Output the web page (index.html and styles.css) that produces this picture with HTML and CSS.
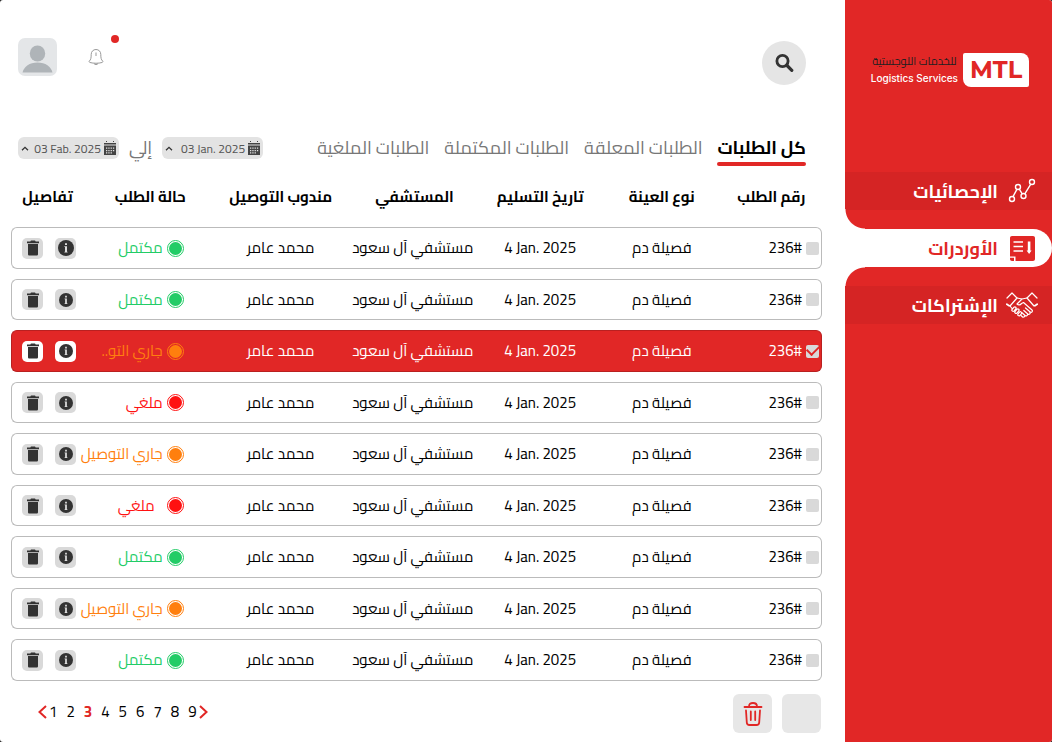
FILE: index.html
```html
<!DOCTYPE html>
<html lang="ar" dir="rtl">
<head>
  <meta charset="UTF-8" />
  <meta name="viewport" content="width=device-width, initial-scale=1.0"/>
  <title>MTL - الأوردرات</title>
  <link rel="stylesheet" href="styles.css">
</head>
<body>
  <!-- Shared icons -->
  <svg class="sprite" aria-hidden="true">
    <symbol id="i-info" viewBox="0 0 16 16">
      <circle cx="8" cy="8" r="8" fill="#333"/>
      <path d="M7 3.200h2v1.900H7zM6.400 6.300H9v5.500h.6v.8H6.400v-.8H7V7.100h-.6z" fill="#ddd"/>
    </symbol>
    <symbol id="i-trash" viewBox="0 0 12 16">
      <path d="M4 .5h4l.7 1H12v1.700H0V1.500h3.300zM1 4h10v10.200c0 .8-.6 1.300-1.300 1.300H2.300C1.600 15.500 1 15 1 14.200z" fill="#333"/>
    </symbol>
    <symbol id="i-calendar" viewBox="0 0 12 14">
      <path d="M2 0h1v1H2zM9 0h1v1H9zM0 2h12v1.500H0zM0 4.500h12V14H0z" fill="#444"/>
      <path d="M2 6.500h1.300v1.300H2zM4.300 6.500h1.300v1.300H4.300zM6.600 6.500h1.300v1.300H6.600zM8.900 6.500h1.300v1.300H8.900zM2 8.900h1.300v1.300H2zM4.300 8.900h1.300v1.300H4.300zM6.600 8.900h1.300v1.300H6.600zM8.900 8.900h1.300v1.300H8.900zM2 11.300h1.300v1.300H2zM4.300 11.300h1.300v1.300H4.300zM6.600 11.300h1.300v1.300H6.600z" fill="#e3e3e3"/>
    </symbol>
    <symbol id="i-up" viewBox="0 0 8 5">
      <path d="M1 4.300 4 1.300l3 3" fill="none" stroke="#333" stroke-width="1.300"/>
    </symbol>
  </svg>

  <div class="app">
    <aside class="sidebar">
      <div class="brand">
        <div class="brand-mark">MTL</div>
        <div class="brand-text">
          <span class="brand-ar">للخدمات اللوجستية</span>
          <span class="brand-en">Logistics Services</span>
        </div>
      </div>
      <nav class="menu">
        <a href="#" class="menu-item">
          <svg width="32" height="32" viewBox="0 0 32 32" fill="none" stroke="#fff" stroke-width="1.400">
            <circle cx="6" cy="24" r="2.500"/><circle cx="12" cy="12" r="2.500"/><circle cx="17.500" cy="21" r="2.500"/><circle cx="26" cy="7" r="2.500"/>
            <path d="M7 21.700l3.900-7.300M13.300 14.200l2.900 4.700M18.800 18.800l6-9.600"/>
          </svg>
          <span>الإحصائيات</span>
        </a>
        <a href="#" class="menu-item active">
          <svg width="32" height="32" viewBox="0 0 32 32">
            <path d="M6 4h21c1.200 0 2 .8 2 2v21c0 1.200-.8 2-2 2H9.500v-4.500H4V6c0-1.200.8-2 2-2z" fill="#e12726"/>
            <path d="M4 25.800h4V29H6c-1.200 0-2-.8-2-2z" fill="#e12726"/>
            <path d="M7.500 10h9.500M7.500 14.500h9.500M7.500 19h9.500" stroke="#fff" stroke-width="1.600"/>
            <path d="M21.800 9.500h2.600v9h1.200l-2.500 3.500-2.500-3.500h1.200z" fill="#fff"/>
          </svg>
          <span>الأوردرات</span>
        </a>
        <a href="#" class="menu-item">
          <svg width="32" height="32" viewBox="0 0 32 32" fill="none" stroke="#fff" stroke-width="1.200" stroke-linejoin="round" stroke-linecap="round">
            <path d="M1 9l5-5M0 15l3 2M31 9l-5-5M32 15l-3 2M6 4l5 5-7 8-3-2M26 4l-5 5 7 8 3-2"/>
            <path d="M11 9l5 1 5-1M16 10l-5 5c1.500 1.500 3 1.200 4.500-.5l2-1 8.500 7.500c1.200 1.200-.4 3-1.800 2l-4.700-4"/>
            <path d="M24 23.200c.8 1.600-1 2.800-2.200 1.800l-4-3.500M21.500 25.200c.4 1.500-1.400 2.300-2.500 1.300l-3-2.700M18.800 26.700c0 1.400-1.600 1.800-2.500 1l-1.300-1.200"/>
            <path d="M4 17l2 2.500M6 20.500l2-2.300c1.200-1 2.800.5 1.800 1.700l-1.600 2c-1.200 1-3-.2-2.200-1.400zM9 22.500l2-2.300c1.200-1 2.800.5 1.800 1.700l-1.800 2.200c-1.200 1-2.800-.4-2-1.600zM12 25l1.500-1.900c1.200-1 2.800.5 1.800 1.700l-1.300 1.700c-1.200 1-2.800-.3-2-1.500z"/>
          </svg>
          <span>الإشتراكات</span>
        </a>
      </nav>
    </aside>

    <main class="content">
      <header class="topbar">
        <button class="search-btn" aria-label="بحث">
          <svg width="20" height="20" viewBox="0 0 20 20" fill="none" stroke="#333">
            <circle cx="8.500" cy="8" r="5.600" stroke-width="2.800"/>
            <path d="M13 12.500l4.800 4.800" stroke-width="3.200" stroke-linecap="round"/>
          </svg>
        </button>
        <div class="user">
          <button class="bell" aria-label="الإشعارات">
            <svg width="16" height="18" viewBox="0 0 16 18" fill="none" stroke="#999" stroke-width="1">
              <path d="M8 1.500c-2.800 0-4.800 2-4.800 5 0 3.500-.4 5.200-1.800 6.500-.6.700-.2 1.200.6 1.500 3.500 1 8.500 1 12 0 .8-.3 1.200-.8.6-1.500-1.400-1.300-1.800-3-1.800-6.500 0-3-2-5-4.800-5z"/>
              <path d="M8 4.500v3.500M6 15.500c.8 1.400 3.200 1.400 4 0"/>
            </svg>
            <span class="bell-dot"></span>
          </button>
          <svg class="avatar" width="39" height="38" viewBox="0 0 39 38">
            <ellipse cx="19.500" cy="15.500" rx="7.700" ry="8" fill="#afb4b8"/>
            <path d="M4.500 34.500c1.500-6 7-10 15-10s13.500 4 15 10z" fill="#afb4b8"/>
          </svg>
        </div>
      </header>

      <div class="filters">
        <nav class="tabs">
          <a href="#" class="tab active">كل الطلبات</a>
          <a href="#" class="tab">الطلبات المعلقة</a>
          <a href="#" class="tab">الطلبات المكتملة</a>
          <a href="#" class="tab">الطلبات الملغية</a>
        </nav>
        <div class="dates">
          <button class="date"><svg width="12" height="14"><use href="#i-calendar"/></svg><span dir="ltr">03 Jan. 2025</span><svg class="caret" width="8" height="5"><use href="#i-up"/></svg></button>
          <span class="to">إلي</span>
          <button class="date"><svg width="12" height="14"><use href="#i-calendar"/></svg><span dir="ltr">03 Fab. 2025</span><svg class="caret" width="8" height="5"><use href="#i-up"/></svg></button>
        </div>
      </div>

      <table class="orders">
        <thead>
          <tr>
            <th class="col-number">رقم الطلب</th>
            <th class="col-type">نوع العينة</th>
            <th class="col-date">تاريخ التسليم</th>
            <th class="col-hospital">المستشفي</th>
            <th class="col-agent">مندوب التوصيل</th>
            <th class="col-status">حالة الطلب</th>
            <th class="col-actions">تفاصيل</th>
          </tr>
        </thead>
        <tbody>
          <tr>
            <td><label class="number"><input type="checkbox"><bdi>236#</bdi></label></td>
            <td>فصيلة دم</td>
            <td><bdi>4 Jan. 2025</bdi></td>
            <td>مستشفي آل سعود</td>
            <td>محمد عامر</td>
            <td><div class="status done"><i class="dot"></i>مكتمل</div></td>
            <td><div class="actions"><button aria-label="تفاصيل"><svg class="info" width="14" height="14"><use href="#i-info"/></svg></button><button aria-label="حذف"><svg width="12" height="16"><use href="#i-trash"/></svg></button></div></td>
          </tr>
          <tr>
            <td><label class="number"><input type="checkbox"><bdi>236#</bdi></label></td>
            <td>فصيلة دم</td>
            <td><bdi>4 Jan. 2025</bdi></td>
            <td>مستشفي آل سعود</td>
            <td>محمد عامر</td>
            <td><div class="status done"><i class="dot"></i>مكتمل</div></td>
            <td><div class="actions"><button aria-label="تفاصيل"><svg class="info" width="14" height="14"><use href="#i-info"/></svg></button><button aria-label="حذف"><svg width="12" height="16"><use href="#i-trash"/></svg></button></div></td>
          </tr>
          <tr class="selected">
            <td><label class="number"><input type="checkbox" checked><bdi>236#</bdi></label></td>
            <td>فصيلة دم</td>
            <td><bdi>4 Jan. 2025</bdi></td>
            <td>مستشفي آل سعود</td>
            <td>محمد عامر</td>
            <td><div class="status pending"><i class="dot"></i>جاري التو..</div></td>
            <td><div class="actions"><button aria-label="تفاصيل"><svg class="info" width="14" height="14"><use href="#i-info"/></svg></button><button aria-label="حذف"><svg width="12" height="16"><use href="#i-trash"/></svg></button></div></td>
          </tr>
          <tr>
            <td><label class="number"><input type="checkbox"><bdi>236#</bdi></label></td>
            <td>فصيلة دم</td>
            <td><bdi>4 Jan. 2025</bdi></td>
            <td>مستشفي آل سعود</td>
            <td>محمد عامر</td>
            <td><div class="status cancelled"><i class="dot"></i>ملغي</div></td>
            <td><div class="actions"><button aria-label="تفاصيل"><svg class="info" width="14" height="14"><use href="#i-info"/></svg></button><button aria-label="حذف"><svg width="12" height="16"><use href="#i-trash"/></svg></button></div></td>
          </tr>
          <tr>
            <td><label class="number"><input type="checkbox"><bdi>236#</bdi></label></td>
            <td>فصيلة دم</td>
            <td><bdi>4 Jan. 2025</bdi></td>
            <td>مستشفي آل سعود</td>
            <td>محمد عامر</td>
            <td><div class="status pending"><i class="dot"></i>جاري التوصيل</div></td>
            <td><div class="actions"><button aria-label="تفاصيل"><svg class="info" width="14" height="14"><use href="#i-info"/></svg></button><button aria-label="حذف"><svg width="12" height="16"><use href="#i-trash"/></svg></button></div></td>
          </tr>
          <tr>
            <td><label class="number"><input type="checkbox"><bdi>236#</bdi></label></td>
            <td>فصيلة دم</td>
            <td><bdi>4 Jan. 2025</bdi></td>
            <td>مستشفي آل سعود</td>
            <td>محمد عامر</td>
            <td><div class="status cancelled spaced"><i class="dot"></i>ملغي</div></td>
            <td><div class="actions"><button aria-label="تفاصيل"><svg class="info" width="14" height="14"><use href="#i-info"/></svg></button><button aria-label="حذف"><svg width="12" height="16"><use href="#i-trash"/></svg></button></div></td>
          </tr>
          <tr>
            <td><label class="number"><input type="checkbox"><bdi>236#</bdi></label></td>
            <td>فصيلة دم</td>
            <td><bdi>4 Jan. 2025</bdi></td>
            <td>مستشفي آل سعود</td>
            <td>محمد عامر</td>
            <td><div class="status done"><i class="dot"></i>مكتمل</div></td>
            <td><div class="actions"><button aria-label="تفاصيل"><svg class="info" width="14" height="14"><use href="#i-info"/></svg></button><button aria-label="حذف"><svg width="12" height="16"><use href="#i-trash"/></svg></button></div></td>
          </tr>
          <tr>
            <td><label class="number"><input type="checkbox"><bdi>236#</bdi></label></td>
            <td>فصيلة دم</td>
            <td><bdi>4 Jan. 2025</bdi></td>
            <td>مستشفي آل سعود</td>
            <td>محمد عامر</td>
            <td><div class="status pending"><i class="dot"></i>جاري التوصيل</div></td>
            <td><div class="actions"><button aria-label="تفاصيل"><svg class="info" width="14" height="14"><use href="#i-info"/></svg></button><button aria-label="حذف"><svg width="12" height="16"><use href="#i-trash"/></svg></button></div></td>
          </tr>
          <tr>
            <td><label class="number"><input type="checkbox"><bdi>236#</bdi></label></td>
            <td>فصيلة دم</td>
            <td><bdi>4 Jan. 2025</bdi></td>
            <td>مستشفي آل سعود</td>
            <td>محمد عامر</td>
            <td><div class="status done"><i class="dot"></i>مكتمل</div></td>
            <td><div class="actions"><button aria-label="تفاصيل"><svg class="info" width="14" height="14"><use href="#i-info"/></svg></button><button aria-label="حذف"><svg width="12" height="16"><use href="#i-trash"/></svg></button></div></td>
          </tr>
        </tbody>
      </table>

      <footer class="bottom">
        <div class="bulk">
          <button class="bulk-btn" aria-label="تحديد"></button>
          <button class="bulk-btn" aria-label="حذف المحدد">
            <svg width="20" height="26" viewBox="0 0 20 26" fill="none" stroke="#e12726" stroke-width="1.800" stroke-linecap="round" stroke-linejoin="round">
              <path d="M1.500 6h17M6 5.500c0-2.500 1.500-3.500 4-3.500s4 1 4 3.500M3 9.500l.8 12c.1 1.800 1 2.500 2.700 2.500h7c1.700 0 2.600-.7 2.700-2.500l.8-12M7.800 10.500v8.500M12.200 10.500v8.500"/>
            </svg>
          </button>
        </div>
        <nav class="pages" dir="ltr">
          <a href="#" class="arrow" aria-label="السابق"><svg width="9" height="14" viewBox="0 0 9 14"><path d="M8 1 1.500 7 8 13"/></svg></a>
          <div class="page-list">
            <a href="#">1</a>
            <a href="#">2</a>
            <a href="#" class="current">3</a>
            <a href="#">4</a>
            <a href="#">5</a>
            <a href="#">6</a>
            <a href="#">7</a>
            <a href="#">8</a>
            <a href="#">9</a>
          </div>
          <a href="#" class="arrow" aria-label="التالي"><svg width="9" height="14" viewBox="0 0 9 14"><path d="M1 1l6.500 6L1 13"/></svg></a>
        </nav>
      </footer>
    </main>
  </div>
</body>
</html>
```
FILE: styles.css
```css
* {
  box-sizing: border-box;
}

html {
  background: #1e1e1e;
}

body {
  margin: 0;
  font-family: Cairo, "Noto Sans", "DejaVu Sans", sans-serif;
  font-size: 15px;
  color: #000;
}

a {
  color: inherit;
  text-decoration: none;
}

button {
  border: none;
  padding: 0;
  background: none;
  font-family: inherit;
  cursor: pointer;
}

svg {
  display: block;
  flex-shrink: 0;
}

.sprite {
  display: none;
}

.app {
  display: flex;
  min-height: 100vh;
  background: #fff;
  border-radius: 3px;
  overflow: hidden;
}

/* Sidebar */
.sidebar {
  width: 207px;
  flex-shrink: 0;
  background: #e12726;
  padding-top: 53px;
}

.brand {
  display: flex;
  align-items: center;
  gap: 5px;
  padding-right: 23px;
}

.brand-mark {
  width: 66px;
  height: 34px;
  border-radius: 2px 8px 2px 8px;
  background: #fff;
  color: #e12726;
  font-family: Montserrat, Inter, sans-serif;
  font-weight: 700;
  font-size: 24px;
  line-height: 34px;
  text-align: center;
}

.brand-text {
  display: flex;
  flex-direction: column;
  align-items: center;
  white-space: nowrap;
}

.brand-ar {
  font-size: 11px;
  line-height: 17px;
  color: #231f20;
}

.brand-en {
  font-family: Inter, sans-serif;
  font-size: 10px;
  font-weight: 500;
  line-height: 17px;
  color: #fff;
}

.menu {
  display: flex;
  flex-direction: column;
  gap: 19px;
  margin-top: 85px;
}

.menu-item {
  display: flex;
  align-items: center;
  gap: 8px;
  height: 38px;
  padding-right: 14px;
  background: #d52424;
  color: #fff;
  font-size: 18px;
  font-weight: 700;
  position: relative;
}

.menu-item.active {
  background: #fff;
  color: #e12726;
  border-radius: 0 19px 19px 0;
}

/* inverted corners around the active item */
.menu-item.active::before,
.menu-item.active::after {
  content: "";
  position: absolute;
  left: 0;
  width: 20px;
  height: 20px;
}

.menu-item.active::before {
  bottom: 100%;
  background: radial-gradient(circle at top right, transparent 19px, #fff 20px);
}

.menu-item.active::after {
  top: 100%;
  background: radial-gradient(circle at bottom right, transparent 19px, #fff 20px);
}

/* Main */
.content {
  flex: 1;
  min-width: 0;
  padding: 38px 23px 9px 11px;
}

.topbar {
  display: flex;
  justify-content: space-between;
  align-items: flex-start;
  padding: 0 16px 0 7px;
}

.search-btn {
  width: 44px;
  height: 44px;
  margin-top: 3px;
  border-radius: 50%;
  background: #e5e5e5;
  display: grid;
  place-items: center;
}

.user {
  display: flex;
  align-items: center;
  gap: 31px;
}

.bell {
  position: relative;
}

.bell-dot {
  position: absolute;
  top: -13px;
  left: 23px;
  width: 8px;
  height: 8px;
  border-radius: 50%;
  background: #e12726;
}

.avatar {
  background: #e4e6e8;
  border-radius: 7px;
}

.filters {
  display: flex;
  justify-content: space-between;
  align-items: flex-start;
  margin-top: 49px;
  padding: 0 16px 0 7px;
}

.tabs {
  display: flex;
  gap: 15px;
}

.tab {
  font-size: 18px;
  line-height: 28px;
  color: #777;
  white-space: nowrap;
}

.tab.active {
  color: #000;
  font-weight: 700;
}

.tab.active::after {
  content: "";
  display: block;
  height: 4px;
  border-radius: 2px;
  background: #e12726;
}

.dates {
  display: flex;
  align-items: center;
  gap: 10px;
  margin-top: 3px;
}

.date {
  display: flex;
  align-items: center;
  gap: 3px;
  width: 101px;
  height: 22px;
  padding: 0 3px;
  border-radius: 6px;
  background: #e3e3e3;
  color: #555;
  font-size: 12px;
  white-space: nowrap;
}

.caret {
  margin-right: auto;
}

.to {
  font-size: 18px;
  line-height: 22px;
  color: #777;
}

/* Orders table */
.orders {
  width: 100%;
  margin-top: 1px;
  table-layout: fixed;
  border-collapse: separate;
  border-spacing: 0 10px;
}

.orders th {
  height: 40px;
  padding: 0 0 0 4px;
  font-size: 15px;
  font-weight: 700;
  line-height: 24px;
  white-space: nowrap;
}

.col-number { width: 13%; }
.col-type { width: 14%; }
.col-date { width: 16%; }
.col-hospital { width: 15%; }
.col-agent { width: 18%; }
.col-status { width: 15%; }
.col-actions { width: 9%; }

.orders .col-status {
  text-align: right;
  padding-right: 20px;
}

.orders .col-actions {
  padding: 0;
}

.orders td {
  height: 41px;
  padding: 0 0 0 4px;
  border: solid #bbb;
  border-width: 1px 0;
  font-size: 15px;
  line-height: 22px;
  text-align: center;
  white-space: nowrap;
}

.orders tr:nth-child(odd) td {
  height: 42px;
}

.orders td:first-child {
  border-right-width: 1px;
  border-radius: 0 6px 6px 0;
}

.orders td:last-child {
  border-left-width: 1px;
  border-radius: 6px 0 0 6px;
}

.number {
  display: flex;
  align-items: center;
  gap: 4px;
  padding-right: 2px;
}

.number input {
  appearance: none;
  width: 13px;
  height: 13px;
  margin: 0;
  border-radius: 2px;
  background: #d9d9d9;
  display: grid;
  place-items: center;
}

.number input:checked::before {
  content: "";
  width: 10px;
  height: 6px;
  margin-bottom: 4px;
  border: solid #e12726;
  border-width: 0 0 2px 2px;
  transform: rotate(-45deg);
}

.status {
  display: flex;
  align-items: center;
  gap: 4px;
  padding-right: 22px;
}

.status.spaced {
  gap: 12px;
}

.dot {
  width: 17px;
  height: 17px;
  flex-shrink: 0;
  border: 1px solid currentColor;
  border-radius: 50%;
  background: currentColor;
  background-clip: content-box;
  padding: 1px;
}

.done { color: #22cc66; }
.pending { color: #ff7f0e; }
.cancelled { color: #ff1111; }

.actions {
  display: flex;
  gap: 12px;
  padding-right: 8px;
}

.actions button {
  width: 21px;
  height: 21px;
  border-radius: 5px;
  background: #d9d9d9;
  display: grid;
  place-items: center;
}

.orders tbody tr:first-child .info {
  width: 16px;
  height: 16px;
}

.orders .selected td {
  background: #e12726;
  border-color: #b92020;
  color: #fff;
}

.selected .actions button {
  background: #fff;
}

/* Footer */
.bottom {
  display: flex;
  justify-content: space-between;
  align-items: flex-start;
  margin-top: 3px;
  padding: 0 1px 0 27px;
}

.bulk {
  display: flex;
  gap: 10px;
}

.bulk-btn {
  width: 39px;
  height: 39px;
  border-radius: 6px;
  background: #e7e7e7;
  display: grid;
  place-items: center;
}

.pages {
  display: flex;
  align-items: center;
  gap: 2px;
  line-height: 36px;
}

.page-list {
  display: flex;
  gap: 9px;
}

.pages .current {
  color: #e12726;
  font-weight: 700;
}

.arrow svg {
  fill: none;
  stroke: #e12726;
  stroke-width: 2;
}
```
